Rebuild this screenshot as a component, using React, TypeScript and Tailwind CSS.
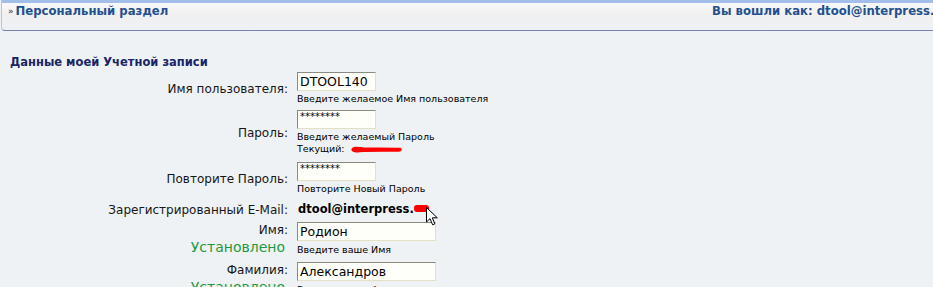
import React from "react";

const font = { fontFamily: '"DejaVu Sans", Verdana, sans-serif' };

const Field = ({ value, w, small }: { value: string; w: string; small?: boolean }) => (
  <div
    className={`${w} h-[19px] bg-[#fffffa] border border-t-[#8a8a80] border-l-[#8a8a80] border-r-[#e4e0c4] border-b-[#e4e0c4] pl-[2px] flex overflow-hidden`}
  >
    {small ? (
      <span className="text-[10px] leading-[11px] text-black">{value}</span>
    ) : (
      <span className="text-[12.5px] leading-[17px] text-black">{value}</span>
    )}
  </div>
);

const Hint = ({ children }: { children: React.ReactNode }) => (
  <div className="text-[9.5px] leading-[12px] text-black whitespace-nowrap">{children}</div>
);

const Label = ({ children, green }: { children: React.ReactNode; green?: boolean }) => (
  <div className="w-[288px] shrink-0 text-right text-[12px] leading-[16px] text-[#161616]">
    <div>{children}</div>
    {green && <div className="text-[14px] leading-[18px] text-[#1e9a3c] pr-[3px]">Установлено</div>}
  </div>
);

const Row = ({ mt, children }: { mt: string; children: React.ReactNode }) => (
  <div className={`flex items-center gap-x-[9px] ${mt}`}>{children}</div>
);

const Scribble = () => (
  <svg width="54" height="9" viewBox="0 0 54 9" className="ml-[4px]">
    <path
      d="M3 4.5 C 4 1.5, 9 2.5, 14 3 C 24 3.5, 36 3, 51 3.5 C 53 4.2, 52 6, 50 6 C 38 6.2, 26 6, 14 6.3 C 9 6.5, 4 7.8, 3 4.5 Z"
      fill="#ff0000"
      stroke="#ff0000"
      strokeWidth="1.5"
      strokeLinejoin="round"
    />
  </svg>
);

const Cursor = () => (
  <svg width="13" height="19" viewBox="0 0 13 19" className="absolute left-[12px] top-[2px]">
    <path d="M0.5 0.5 L0.5 15 L4 11.6 L6.6 17.8 L8.8 16.9 L6.3 10.8 L11.3 10.8 Z" fill="#fff" stroke="#000" strokeWidth="1" />
  </svg>
);

export default function App() {
  return (
    <div className="w-[933px] h-[287px] overflow-hidden bg-[#eef2f5]" style={font}>
      {/* header */}
      <div className="h-[31px] ml-[1px] rounded-bl-[4px] border-l border-b border-l-[#b8c4dc] border-b-[#7880a8] overflow-hidden bg-gradient-to-b from-[#fbfbfb] via-[#f0f0f0] to-[#eef1f5]">
        <div className="h-[3px] bg-[#a3bee8]" />
        <div className="flex items-center h-[18px] pl-[6px] whitespace-nowrap">
          <div className="w-[704px] shrink-0 flex items-center text-[#23508e] font-bold text-[11.7px]">
            <span className="text-[9px] text-[#333] mr-[2px] font-normal">»</span>
            Персональный раздел
          </div>
          <div className="shrink-0 text-[#23508e] font-bold text-[11.7px]">Вы вошли как: dtool@interpress.ru</div>
        </div>
      </div>

      <div className="pl-[10px] mt-[24px] text-[11.5px] font-bold text-[#1a2566] leading-[14px]">
        Данные моей Учетной записи
      </div>

      <div className="flex flex-col">
        <Row mt="mt-[3px]">
          <Label>Имя пользователя:</Label>
          <div>
            <Field value="DTOOL140" w="w-[79px]" />
            <div className="mt-[2px]">
              <Hint>Введите желаемое Имя пользователя</Hint>
            </div>
          </div>
        </Row>

        <Row mt="mt-[5px]">
          <Label>Пароль:</Label>
          <div>
            <Field value="********" w="w-[79px]" small />
            <div className="mt-[2px]">
              <Hint>Введите желаемый Пароль</Hint>
              <div className="flex items-center h-[12px]">
                <Hint>Текущий:</Hint>
                <Scribble />
              </div>
            </div>
          </div>
        </Row>

        <Row mt="mt-[7px]">
          <Label>Повторите Пароль:</Label>
          <div>
            <Field value="********" w="w-[79px]" small />
            <div className="mt-[2px]">
              <Hint>Повторите Новый Пароль</Hint>
            </div>
          </div>
        </Row>

        <Row mt="mt-[7px]">
          <Label>Зарегистрированный E-Mail:</Label>
          <div className="flex items-center h-[16px]">
            <span className="ml-[1px] text-[11.5px] font-bold text-black">dtool@interpress.</span>
            <span className="relative inline-block w-[15px] h-[7px] bg-[#ff0000] rounded-[3px] -mt-[4px]">
              <Cursor />
            </span>
          </div>
        </Row>

        <Row mt="mt-[4px]">
          <Label green>Имя:</Label>
          <div>
            <Field value="Родион" w="w-[139px]" />
            <div className="mt-[3px]">
              <Hint>Введите ваше Имя</Hint>
            </div>
          </div>
        </Row>

        <Row mt="mt-[6px]">
          <Label green>Фамилия:</Label>
          <div>
            <Field value="Александров" w="w-[139px]" />
            <div className="mt-[3px]">
              <Hint>Введите вашу Фамилию</Hint>
            </div>
          </div>
        </Row>
      </div>
    </div>
  );
}
